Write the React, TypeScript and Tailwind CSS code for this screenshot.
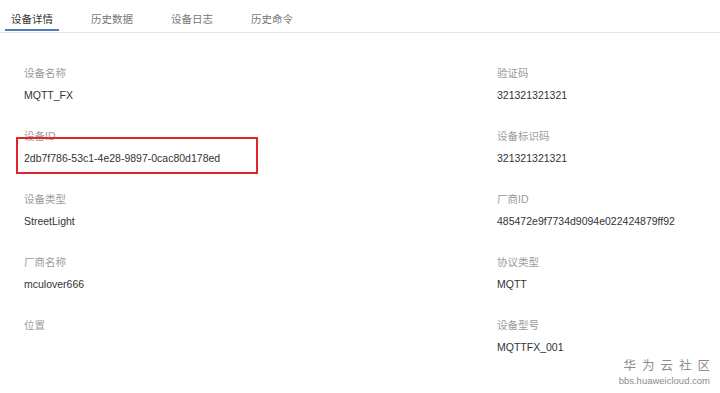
import React from 'react';

const tabs = ['设备详情', '历史数据', '设备日志', '历史命令'];

const fields = [
  { label: '设备名称', value: 'MQTT_FX' },
  { label: '验证码', value: '321321321321' },
  { label: '设备ID', value: '2db7f786-53c1-4e28-9897-0cac80d178ed', marked: true },
  { label: '设备标识码', value: '321321321321' },
  { label: '设备类型', value: 'StreetLight' },
  { label: '厂商ID', value: '485472e9f7734d9094e022424879ff92' },
  { label: '厂商名称', value: 'mculover666' },
  { label: '协议类型', value: 'MQTT' },
  { label: '位置', value: '' },
  { label: '设备型号', value: 'MQTTFX_001' },
];

const App = () => {
  return (
    <div
      className="relative w-[720px] h-[393px] bg-white overflow-hidden"
      style={{ fontFamily: '"Liberation Sans", Arial, "Noto Sans CJK SC", sans-serif' }}
    >
      {/* tabs */}
      <div className="flex gap-[26px] pl-[5px] h-[33px] border-b border-[#e4e4e4]">
        {tabs.map((t, i) => (
          <div
            key={t}
            className={`h-[31px] px-[6px] pt-[13px] text-[10.5px] leading-[12px] ${
              i === 0 ? 'text-[#333] border-b-2 border-[#4f7cba]' : 'text-[#777]'
            }`}
          >
            {t}
          </div>
        ))}
      </div>

      {/* detail grid */}
      <div className="grid grid-cols-[473px_1fr] pl-[24px] pt-[33px]">
        {fields.map((f) => (
          <div key={f.label} className="relative h-[63px]">
            <div className="text-[10.5px] leading-[14px] text-[#9b9b9b]">{f.label}</div>
            <div className="mt-[8px] text-[10.5px] leading-[14px] text-[#333]">{f.value}</div>
            {f.marked && (
              <div className="absolute left-[-8px] top-[8px] w-[242px] h-[37px] border-2 border-[#e0262c]" />
            )}
          </div>
        ))}
      </div>

      {/* watermark */}
      <div className="absolute right-[10px] bottom-[6px] flex flex-col items-end text-[#8c8c8c]">
        <div className="text-[12.5px] leading-[15px] tracking-[6px] mr-[-6px]">华为云社区</div>
        <div className="text-[9.5px] leading-[13px]">bbs.huaweicloud.com</div>
      </div>
    </div>
  );
};

export default App;
